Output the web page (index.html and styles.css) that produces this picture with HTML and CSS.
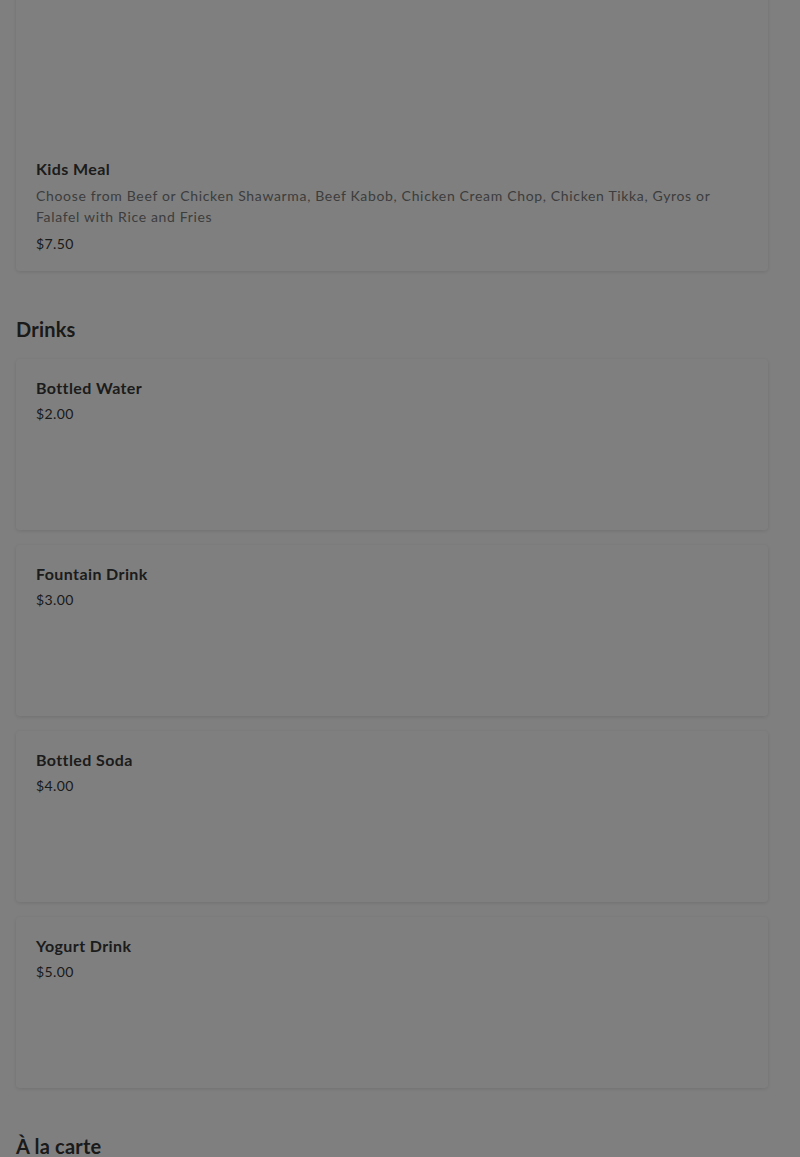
FILE: index.html
```html
<!DOCTYPE html>
<html lang="en">
<head>
    <meta charset="UTF-8">
    <meta name="viewport" content="width=device-width, initial-scale=1.0">
    <title>Menu</title>
    <link rel="stylesheet" href="styles.css">
</head>
<body>
    <div id="menu">
        <div class="section first">
            <div class="item-list">
                <div class="item with-photo">
                    <div class="item-photo"></div>
                    <div class="item-name">Kids Meal</div>
                    <div class="item-desc">Choose from Beef or Chicken Shawarma, Beef Kabob, Chicken Cream Chop, Chicken Tikka, Gyros or Falafel with Rice and Fries</div>
                    <div class="item-price">$7.50</div>
                </div>
            </div>
        </div>

        <div class="section">
            <h2>Drinks</h2>
            <div class="item-list">
                <div class="item">
                    <div class="item-name">Bottled Water</div>
                    <div class="item-price">$2.00</div>
                </div>
                <div class="item">
                    <div class="item-name">Fountain Drink</div>
                    <div class="item-price">$3.00</div>
                </div>
                <div class="item">
                    <div class="item-name">Bottled Soda</div>
                    <div class="item-price">$4.00</div>
                </div>
                <div class="item">
                    <div class="item-name">Yogurt Drink</div>
                    <div class="item-price">$5.00</div>
                </div>
            </div>
        </div>

        <div class="section">
            <h2>À la carte</h2>
        </div>
    </div>

    <!-- modal backdrop -->
    <div id="overlay"></div>
</body>
</html>
```

FILE: styles.css
```css
body {
    margin: 0;
    background-color: #fff;
    font-family: Lato, 'Open Sans', sans-serif;
    color: #333;
}
#menu {
    padding: 0 32px 40px 16px;
}
.section {
    margin-top: 44px;
}
.section.first {
    margin-top: -20px;
}
.section h2 {
    margin: 0 0 16px;
    font-size: 20px;
    line-height: 28px;
    font-weight: 700;
    color: #353535;
    letter-spacing: 0.2px;
}
.item-list {
    display: flex;
    flex-direction: column;
    gap: 15px;
}
.item {
    background: #fff;
    border-radius: 4px;
    box-shadow: 0 1px 4px rgba(0, 0, 0, 0.12);
    padding: 19px 20px 20px;
    min-height: 132px;
}
.item.with-photo {
    padding-top: 0;
    padding-bottom: 17px;
}
.item-photo {
    height: 179px;
}
.item-name {
    font-size: 16px;
    line-height: 20px;
    font-weight: 700;
    color: #383838;
    letter-spacing: 0.4px;
    margin-bottom: 6px;
}
.item-desc {
    font-size: 14px;
    line-height: 21px;
    color: #7a7a7a;
    letter-spacing: 0.66px;
    margin-bottom: 7px;
}
.item-price {
    font-size: 14px;
    line-height: 20px;
    color: #363636;
    letter-spacing: 0.4px;
}
#overlay {
    position: fixed;
    inset: 0;
    background: rgba(0, 0, 0, 0.5);
}
```
